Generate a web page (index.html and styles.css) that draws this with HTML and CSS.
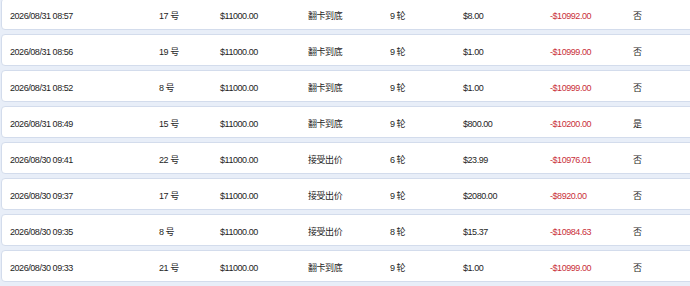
FILE: index.html
```html
<!DOCTYPE html>
<html lang="zh-CN">
<head>
  <meta charset="UTF-8">
  <meta name="viewport" content="width=device-width, initial-scale=1.0">
  <title>记录</title>
  <link rel="stylesheet" href="styles.css">
</head>
<body>
  <div class="lista">
    <div class="fila">
      <span>2026/08/31 08:57</span><span>17 号</span><span>$11000.00</span><span>翻卡到底</span><span>9 轮</span><span>$8.00</span><span class="neg">-$10992.00</span><span>否</span>
    </div>
    <div class="fila">
      <span>2026/08/31 08:56</span><span>19 号</span><span>$11000.00</span><span>翻卡到底</span><span>9 轮</span><span>$1.00</span><span class="neg">-$10999.00</span><span>否</span>
    </div>
    <div class="fila">
      <span>2026/08/31 08:52</span><span>8 号</span><span>$11000.00</span><span>翻卡到底</span><span>9 轮</span><span>$1.00</span><span class="neg">-$10999.00</span><span>否</span>
    </div>
    <div class="fila">
      <span>2026/08/31 08:49</span><span>15 号</span><span>$11000.00</span><span>翻卡到底</span><span>9 轮</span><span>$800.00</span><span class="neg">-$10200.00</span><span>是</span>
    </div>
    <div class="fila">
      <span>2026/08/30 09:41</span><span>22 号</span><span>$11000.00</span><span>接受出价</span><span>6 轮</span><span>$23.99</span><span class="neg">-$10976.01</span><span>否</span>
    </div>
    <div class="fila">
      <span>2026/08/30 09:37</span><span>17 号</span><span>$11000.00</span><span>接受出价</span><span>9 轮</span><span>$2080.00</span><span class="neg">-$8920.00</span><span>否</span>
    </div>
    <div class="fila">
      <span>2026/08/30 09:35</span><span>8 号</span><span>$11000.00</span><span>接受出价</span><span>8 轮</span><span>$15.37</span><span class="neg">-$10984.63</span><span>否</span>
    </div>
    <div class="fila">
      <span>2026/08/30 09:33</span><span>21 号</span><span>$11000.00</span><span>翻卡到底</span><span>9 轮</span><span>$1.00</span><span class="neg">-$10999.00</span><span>否</span>
    </div>
  </div>
</body>
</html>
```

FILE: styles.css
```css
* {
  box-sizing: border-box;
}
body {
  margin: 0;
  padding: 0;
  background-color: #e8eef8;
  font-family: "Liberation Sans", Arial, "Noto Sans CJK SC", sans-serif;
  font-size: 9px;
  letter-spacing: -0.45px;
  color: #1e1e1e;
  overflow: hidden;
}
.lista {
  margin: -2px -20px 0 1px;
  display: flex;
  flex-direction: column;
  gap: 4px;
}
.fila {
  display: grid;
  grid-template-columns: 149px 61px 88px 82px 73px 87px 83px 1fr;
  align-items: center;
  height: 32px;
  padding: 3px 0 0 8px;
  line-height: 12px;
  background-color: #fff;
  border: 1px solid #d3dcec;
  border-radius: 4px;
}
.neg {
  color: #c9303a;
}
```
